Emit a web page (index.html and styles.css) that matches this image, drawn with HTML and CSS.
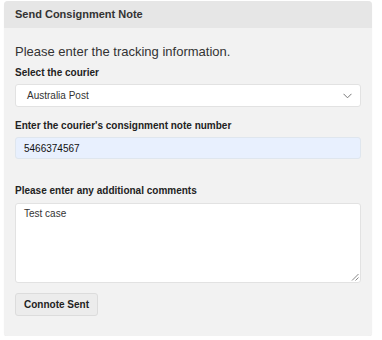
FILE: index.html
```html
<!DOCTYPE html>
<html>
<head>
<meta charset="utf-8">
<link rel="stylesheet" href="styles.css">
</head>
<body>
<div class="panel">
  <div class="panel-head">Send Consignment Note</div>
  <div class="panel-body">
    <p class="intro">Please enter the tracking information.</p>
    <label class="lbl">Select the courier</label>
    <div class="select">
      <span>Australia Post</span>
      <svg class="chev" width="9" height="6" viewBox="0 0 9 6"><path d="M0.5 0.8 L4.5 4.8 L8.5 0.8" fill="none" stroke="#777" stroke-width="1"/></svg>
    </div>
    <label class="lbl lbl2">Enter the courier's consignment note number</label>
    <div class="input">5466374567</div>
    <label class="lbl lbl3">Please enter any additional comments</label>
    <div class="textarea">
      <span>Test case</span>
      <svg class="grip" width="8" height="8" viewBox="0 0 8 8"><path d="M7.5 1 L1 7.5 M7.5 4.5 L4.5 7.5" stroke="#888" stroke-width="1"/></svg>
    </div>
    <button class="btn">Connote Sent</button>
  </div>
</div>
</body>
</html>
```
FILE: styles.css
```css
html, body { margin: 0; padding: 0; background: #fff; }
body { font-family: "Liberation Sans", Arial, sans-serif; color: #222; padding: 1px 9px 0 4px; }
.panel {
  width: 368px;
  background: #f2f2f2;
  border-radius: 4px;
  box-shadow: 0 1px 1px rgba(0,0,0,0.08);
  height: 335px;
  box-sizing: border-box;
}
.panel-head {
  background: #e6e6e6;
  height: 27px;
  line-height: 27px;
  padding-left: 11px;
  font-weight: bold;
  font-size: 11px;
  color: #333;
  border-radius: 4px 4px 0 0;
}
.panel-body { padding: 0 11px; display: flex; flex-direction: column; align-items: flex-start; }
.intro { margin: 16px 0 0; font-size: 13px; line-height: 16px; color: #333; }
.lbl { font-size: 10px; font-weight: bold; line-height: 12px; color: #222; margin-top: 7px; }
.lbl2 { margin-top: 13px; }
.lbl3 { margin-top: 26px; }
.select {
  margin-top: 5px;
  width: 346px; height: 23px; box-sizing: border-box;
  background: #fff; border: 1px solid #e2e2e2; border-radius: 3px;
  display: flex; align-items: center; justify-content: space-between;
  padding: 0 8px 0 11px; font-size: 10px; color: #333;
}
.input {
  margin-top: 5px;
  width: 346px; height: 22px; box-sizing: border-box;
  background: #e8f0fe; border: 1px solid #dfe6ee; border-radius: 3px;
  display: flex; align-items: center; padding: 0 8px;
  font-size: 10px; color: #111;
}
.textarea {
  margin-top: 6px;
  width: 346px; height: 80px; box-sizing: border-box;
  background: #fff; border: 1px solid #e2e2e2; border-radius: 3px;
  padding: 4px 8px; font-size: 10px; color: #333; position: relative;
}
.grip { position: absolute; right: 1px; bottom: 1px; }
.btn {
  margin-top: 10px;
  height: 23px; padding: 0 8px;
  background: #ececec; border: 1px solid #dcdcdc; border-radius: 3px;
  font-family: "Liberation Sans", Arial, sans-serif;
  font-size: 10px; font-weight: bold; color: #222;
}
```
